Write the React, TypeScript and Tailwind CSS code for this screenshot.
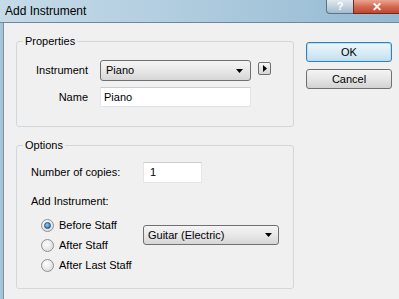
function DropArrow() {
  return (
    <svg width="7" height="4" viewBox="0 0 7 4" className="shrink-0">
      <path d="M0 0h7L3.5 4z" fill="#000" />
    </svg>
  );
}

function Radio({ checked, label }: { checked?: boolean; label: string }) {
  return (
    <div className="h-[20px] flex items-center">
      <span className="w-[13px] h-[13px] rounded-full border border-[#8f8f8f] bg-[radial-gradient(circle_at_40%_35%,#ffffff,#d4d4d4)] flex items-center justify-center">
        {checked && (
          <span className="w-[7px] h-[7px] rounded-full bg-[radial-gradient(circle_at_40%_35%,#8fd0f5,#1f5f99)] border border-[#1c4f80]" />
        )}
      </span>
      <span className="ml-[5px] leading-[13px]">{label}</span>
    </div>
  );
}

export default function App() {
  return (
    <div className="w-[399px] h-[299px] overflow-hidden bg-[#f0f0f0] flex flex-col text-[11px] text-black font-['Liberation_Sans',Arial,sans-serif]">
      {/* title bar */}
      <div className="h-[23px] shrink-0 flex items-start border-b border-[#6f8799] bg-gradient-to-r from-[#c6dbe9] via-[#aecbde] to-[#94b9d1]">
        <span className="pl-[5px] pt-[3px] text-[12px] leading-[16px]">Add Instrument</span>
        <div className="ml-auto flex h-[14px]">
          <div className="w-[27px] rounded-bl-[4px] border border-t-0 border-r-0 border-[#5d7387] bg-gradient-to-b from-[#dfe8ef] to-[#a5bccd] flex items-center justify-center text-white text-[11px] font-bold leading-none">
            ?
          </div>
          <div className="w-[46px] border-l border-b border-[#6e2a1e] bg-gradient-to-b from-[#e9a593] via-[#d46a52] to-[#c2452c] flex items-center justify-center text-white text-[12px] font-bold leading-none">
            ✕
          </div>
        </div>
      </div>

      <div className="flex-1 flex">
        {/* left window frame */}
        <div className="w-[4px] shrink-0 bg-[#a7c4d8] border-r border-[#7a90a0]" />

        <div className="flex-1 flex pl-[12px]">
          <div className="w-[278px] flex flex-col">
            {/* Properties */}
            <fieldset className="mt-[11px] h-[93px] border border-[#d0d8de] rounded-[3px]">
              <legend className="ml-[6px] px-[2px] leading-[14px]">Properties</legend>
              <div className="pt-[12px] flex flex-col gap-[6px]">
                <div className="flex items-start">
                  <span className="w-[71px] text-right h-[21px] leading-[21px]">Instrument</span>
                  <div className="ml-[12px] w-[151px] h-[21px] border border-[#707070] rounded-[3px] bg-gradient-to-b from-[#f5f5f5] via-[#e8e8e8] to-[#d6d6d6] flex items-center pl-[5px] pr-[7px]">
                    <span className="flex-1">Piano</span>
                    <DropArrow />
                  </div>
                  <div className="ml-[7px] mt-[2px] w-[13px] h-[13px] border border-[#707070] rounded-[2px] bg-gradient-to-b from-[#f6f6f6] to-[#d4d4d4] flex items-center justify-center">
                    <svg width="4" height="7" viewBox="0 0 4 7">
                      <path d="M0 0v7l4-3.5z" fill="#000" />
                    </svg>
                  </div>
                </div>
                <div className="flex items-start">
                  <span className="w-[71px] text-right h-[20px] leading-[20px]">Name</span>
                  <div className="ml-[12px] w-[151px] h-[20px] border border-[#e2e6ea] border-t-[#c9ced4] bg-white pl-[3px] leading-[18px]">
                    Piano
                  </div>
                </div>
              </div>
            </fieldset>

            {/* Options */}
            <fieldset className="mt-[11px] h-[151px] border border-[#d0d8de] rounded-[3px]">
              <legend className="ml-[6px] px-[2px] leading-[14px]">Options</legend>
              <div className="pt-[10px] pl-[14px] flex flex-col">
                <div className="flex items-center">
                  <span className="w-[112px]">Number of copies:</span>
                  <div className="w-[59px] h-[21px] border border-[#e2e6ea] border-t-[#c9ced4] bg-white pl-[6px] leading-[19px]">
                    1
                  </div>
                </div>
                <div className="mt-[12px] leading-[13px]">Add Instrument:</div>
                <div className="mt-[7px] flex">
                  <div className="w-[112px] pl-[10px] flex flex-col">
                    <Radio checked label="Before Staff" />
                    <Radio label="After Staff" />
                    <Radio label="After Last Staff" />
                  </div>
                  <div className="mt-[10px] w-[136px] h-[20px] border border-[#707070] rounded-[3px] bg-gradient-to-b from-[#f5f5f5] via-[#e8e8e8] to-[#d6d6d6] flex items-center pl-[4px] pr-[6px]">
                    <span className="flex-1">Guitar (Electric)</span>
                    <DropArrow />
                  </div>
                </div>
              </div>
            </fieldset>
          </div>

          {/* buttons */}
          <div className="ml-[12px] pt-[19px] flex flex-col gap-[7px]">
            <div className="w-[86px] h-[20px] border border-[#3c7fb1] rounded-[3px] bg-gradient-to-b from-[#eef7fc] via-[#d9ecf7] to-[#c3def0] flex items-center justify-center shadow-[inset_0_0_0_1px_#aee0f8]">
              OK
            </div>
            <div className="w-[86px] h-[20px] border border-[#707070] rounded-[3px] bg-gradient-to-b from-[#f4f4f4] via-[#e6e6e6] to-[#d2d2d2] flex items-center justify-center">
              Cancel
            </div>
          </div>
        </div>
      </div>
    </div>
  );
}
